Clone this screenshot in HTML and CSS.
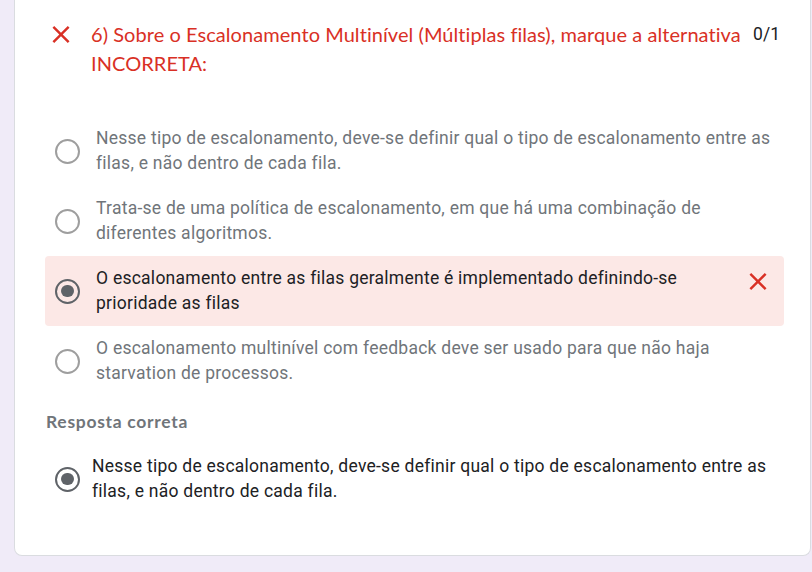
FILE: index.html
```html
<!DOCTYPE html>
<html lang="pt">
<head>
<meta charset="utf-8">
<link rel="stylesheet" href="styles.css">
</head>
<body>
<div class="card">
  <div class="header">
    <svg class="xicon" viewBox="5 5 14 14" width="18" height="17"><path d="M19 6.41L17.59 5 12 10.59 6.41 5 5 6.41 10.59 12 5 17.59 6.41 19 12 13.41 17.59 19 19 17.59 13.41 12z" fill="#d93025"/></svg>
    <div class="title">6) Sobre o Escalonamento Multinível (Múltiplas filas), marque a alternativa INCORRETA:</div>
    <div class="points">0/1</div>
  </div>

  <div class="options">
    <div class="option">
      <span class="radio"></span>
      <div class="otext">Nesse tipo de escalonamento, deve-se definir qual o tipo de escalonamento entre as filas, e não dentro de cada fila.</div>
    </div>
    <div class="option">
      <span class="radio"></span>
      <div class="otext">Trata-se de uma política de escalonamento, em que há uma combinação de diferentes algoritmos.</div>
    </div>
    <div class="option wrong">
      <span class="radio checked"></span>
      <div class="otext">O escalonamento entre as filas geralmente é implementado definindo-se prioridade as filas</div>
      <svg class="xicon mark" viewBox="5 5 14 14" width="18" height="17"><path d="M19 6.41L17.59 5 12 10.59 6.41 5 5 6.41 10.59 12 5 17.59 6.41 19 12 13.41 17.59 19 19 17.59 13.41 12z" fill="#d93025"/></svg>
    </div>
    <div class="option">
      <span class="radio"></span>
      <div class="otext">O escalonamento multinível com feedback deve ser usado para que não haja starvation de processos.</div>
    </div>
  </div>

  <div class="correct-label">Resposta correta</div>
  <div class="correct">
    <span class="radio checked"></span>
    <div class="otext dark">Nesse tipo de escalonamento, deve-se definir qual o tipo de escalonamento entre as filas, e não dentro de cada fila.</div>
  </div>
</div>
</body>
</html>
```

FILE: styles.css
```css
html, body {
  margin: 0;
  padding: 0;
  background: #f0ebf8;
  font-family: Roboto, "Liberation Sans", sans-serif;
}

.card {
  margin-left: 14px;
  width: 797px;
  height: 556px;
  box-sizing: border-box;
  background: #fff;
  border: 1px solid #dadce0;
  border-top: none;
  border-radius: 0 0 8px 8px;
  padding: 20px 26px 0 30px;
}

.header {
  display: flex;
  align-items: flex-start;
}

.header .xicon {
  flex: none;
  margin: 6px 0 0 7px;
}

.title {
  flex: 1;
  margin-left: 21px;
  font-family: Lato, sans-serif;
  font-size: 20px;
  line-height: 29px;
  color: #d93025;
  letter-spacing: 0.06px;
}

.points {
  flex: none;
  font-size: 17.5px;
  line-height: 29px;
  color: #202124;
  margin-right: 4px;
}

.options {
  margin-top: 38px;
  display: flex;
  flex-direction: column;
}

.option {
  display: flex;
  align-items: center;
  height: 70px;
  padding: 0 8px 0 10px;
  border-radius: 4px;
}

.option.wrong {
  background: #fce8e6;
}

.radio {
  flex: none;
  width: 25px;
  height: 25px;
  box-sizing: border-box;
  border-radius: 50%;
  border: 2px solid #9e9e9e;
  display: flex;
  align-items: center;
  justify-content: center;
}

.radio.checked {
  border: 2.5px solid #5f6368;
}

.radio.checked::after {
  content: "";
  width: 12.5px;
  height: 12.5px;
  border-radius: 50%;
  background: #5f6368;
}

.otext {
  flex: 1;
  margin-left: 16px;
  font-size: 17.5px;
  letter-spacing: 0.25px;
  line-height: 25px;
  color: #70757a;
}

.wrong .otext,
.otext.dark {
  color: #202124;
}

.mark {
  flex: none;
  align-self: flex-start;
  margin: 17px 9px 0 20px;
}

.correct-label {
  margin-top: 14px;
  font-family: Lato, sans-serif;
  font-size: 17.5px;
  font-weight: 700;
  line-height: 24px;
  color: #70757a;
  letter-spacing: 0.7px;
  padding-left: 1px;
}

.correct {
  display: flex;
  align-items: center;
  margin-top: 20px;
  padding-left: 10px;
}

.correct .otext {
  margin-left: 12px;
}
```
